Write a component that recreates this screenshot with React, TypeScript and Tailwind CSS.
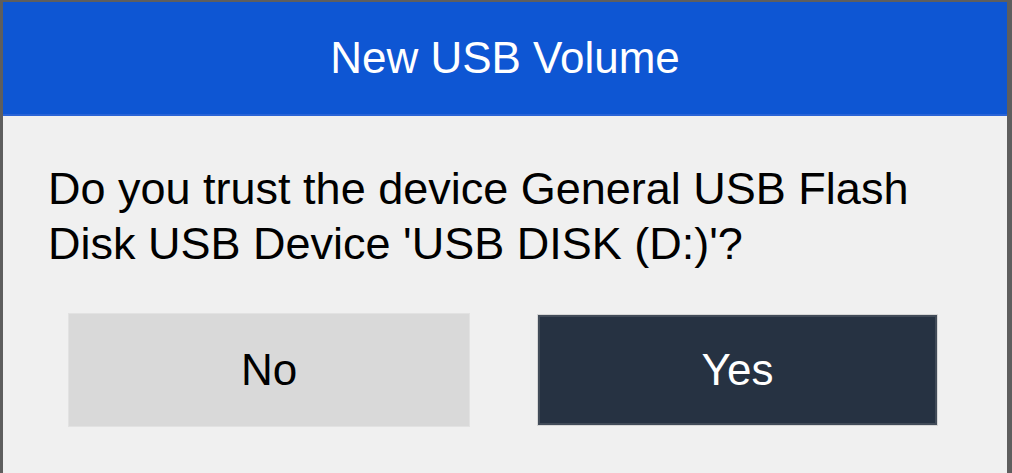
import React from 'react';

const App: React.FC = () => {
  return (
    <div className="w-[1012px] h-[473px] bg-[#5e5e5e] pl-[3px] pt-[2px] pr-[5px] flex overflow-hidden" style={{ fontFamily: '"Liberation Sans", Arial, sans-serif' }}>
      <div className="flex-1 flex flex-col bg-[#f0f0f0]">
        {/* Title bar */}
        <div className="h-[114px] bg-[#0e56d3] flex items-center justify-center border-b-2 border-[#2a64d6]">
          <span className="text-white text-[44px] leading-none">New USB Volume</span>
        </div>

        {/* Message */}
        <p className="mt-[45px] pl-[45px] text-[45px] leading-[55px] text-black">
          Do you trust the device General USB Flash
          <br />
          Disk USB Device 'USB DISK (D:)'?
        </p>

        {/* Buttons */}
        <div className="mt-[42px] pl-[65px] flex items-center gap-[68px]">
          <button className="w-[402px] h-[114px] bg-[#d9d9d9] border border-[#e2e2e2] text-black text-[44px]">
            No
          </button>
          <button className="w-[399px] h-[110px] bg-[#263242] border-2 border-[#414b58] outline outline-1 outline-[#d6d6d6] text-white text-[44px]">
            Yes
          </button>
        </div>
      </div>
    </div>
  );
};

export default App;
